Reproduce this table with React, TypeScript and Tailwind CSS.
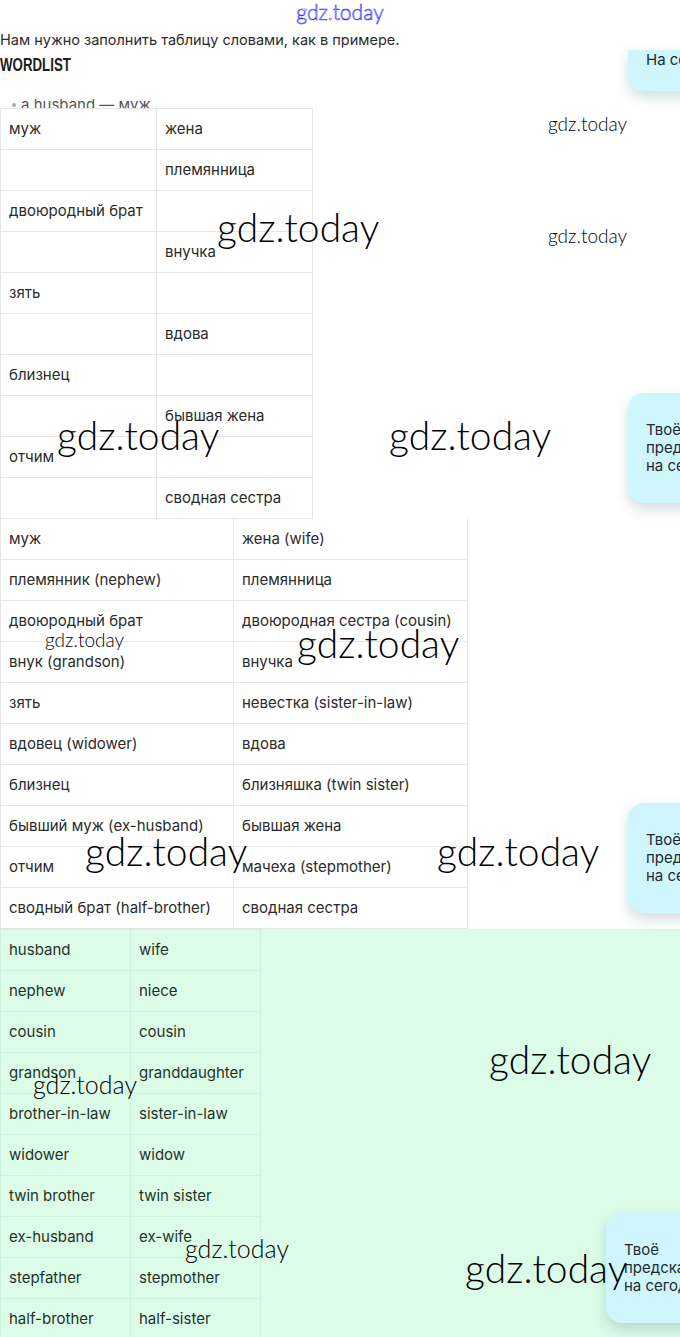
const firstTable = [
  ["муж", "жена"],
  ["", "племянница"],
  ["двоюродный брат", ""],
  ["", "внучка"],
  ["зять", ""],
  ["", "вдова"],
  ["близнец", ""],
  ["", "бывшая жена"],
  ["отчим", ""],
  ["", "сводная сестра"]
];

const secondTable = [
  ["муж", "жена (wife)"],
  ["племянник (nephew)", "племянница"],
  ["двоюродный брат", "двоюродная сестра (cousin)"],
  ["внук (grandson)", "внучка"],
  ["зять", "невестка (sister-in-law)"],
  ["вдовец (widower)", "вдова"],
  ["близнец", "близняшка (twin sister)"],
  ["бывший муж (ex-husband)", "бывшая жена"],
  ["отчим", "мачеха (stepmother)"],
  ["сводный брат (half-brother)", "сводная сестра"]
];

const englishTable = [
  ["husband", "wife"],
  ["nephew", "niece"],
  ["cousin", "cousin"],
  ["grandson", "granddaughter"],
  ["brother-in-law", "sister-in-law"],
  ["widower", "widow"],
  ["twin brother", "twin sister"],
  ["ex-husband", "ex-wife"],
  ["stepfather", "stepmother"],
  ["half-brother", "half-sister"]
];

// watermark stamps: left, top, size
const marks = [
  { x: 548, y: 114, size: "text-[19px] text-[#333]" },
  { x: 217, y: 208, size: "text-[39px]" },
  { x: 548, y: 226, size: "text-[19px] text-[#333]" },
  { x: 57, y: 416, size: "text-[39px]" },
  { x: 389, y: 416, size: "text-[39px]" },
  { x: 45, y: 630, size: "text-[19px] text-[#333]" },
  { x: 297, y: 624, size: "text-[39px]" },
  { x: 85, y: 832, size: "text-[39px]" },
  { x: 437, y: 832, size: "text-[39px]" },
  { x: 489, y: 1040, size: "text-[39px]" },
  { x: 33, y: 1072, size: "text-[25px]" },
  { x: 185, y: 1236, size: "text-[25px]" },
  { x: 465, y: 1249, size: "text-[39px]" }
];

function WordTable({ rows, colWidth, green }: { rows: string[][]; colWidth: string; green?: boolean }) {
  const line = green ? "border-[#cdf2dc]" : "border-[#e6e6e6]";
  return (
    <div className={`grid w-fit border-t border-l ${line} ${colWidth}`}>
      {rows.map((row, i) =>
        row.map((cell, j) => (
          <div
            key={`${i}-${j}`}
            className={`flex h-[41px] items-center border-r border-b ${line} px-[8px] text-[15px] ${green ? "text-[#1f3329]" : "text-[#2b2b2b]"}`}
          >
            {cell}
          </div>
        ))
      )}
    </div>
  );
}

function Bubble({ top, left, cut }: { top: number; left: number; cut?: boolean }) {
  return (
    <div
      className={`absolute w-[220px] bg-[#cff6fd] text-[15px] leading-[18px] text-[#1c2b33] shadow-[0_6px_14px_rgba(0,60,80,0.18)] ${
        cut ? "rounded-b-[16px] pt-[1px] pb-[22px] pl-[18px]" : "rounded-[16px] py-[28px] pl-[18px]"
      }`}
      style={{ top, left }}
    >
      {cut ? (
        <p>На сегодня</p>
      ) : (
        <p>
          Твоё
          <br />
          предсказание
          <br />
          на сегодня
        </p>
      )}
    </div>
  );
}

export default function App() {
  return (
    <div className="relative h-[1337px] w-[680px] overflow-hidden bg-white font-['Inter','Noto_Sans',sans-serif]">
      <div className="flex h-[30px] justify-center">
        <span className="font-['Lato','DejaVu_Sans',sans-serif] text-[21px] font-light leading-[24px] text-transparent [-webkit-text-stroke:0.6px_#3434ff]">
          gdz.today
        </span>
      </div>
      <p className="text-[14.5px] leading-[20px] text-[#2b2b2b]">Нам нужно заполнить таблицу словами, как в примере.</p>
      <h3 className="mt-[5px] w-fit origin-left scale-x-[0.7] font-['Liberation_Sans_Narrow','Liberation_Sans',sans-serif] text-[19px] font-bold leading-[20px] text-[#222]">
        WORDLIST
      </h3>
      <ul className="mt-[20px] h-[13px] overflow-visible pl-[12px] text-[15px] leading-[20px] text-[#555]">
        <li className="flex items-center gap-[5px]">
          <span className="h-[4px] w-[4px] rounded-full bg-[#aaa]" />
          <span>a husband — муж</span>
        </li>
      </ul>

      <div className="relative bg-white">
        <WordTable rows={firstTable} colWidth="grid-cols-[156px_156px]" />
      </div>
      <div className="-mt-px bg-white">
        <WordTable rows={secondTable} colWidth="grid-cols-[233px_234px]" />
      </div>
      <div className="h-[410px] bg-[#dcfce8]">
        <WordTable rows={englishTable} colWidth="grid-cols-[130px_130px]" green />
      </div>

      <Bubble top={50} left={628} cut />
      <Bubble top={393} left={628} />
      <Bubble top={803} left={628} />
      <Bubble top={1213} left={606} />

      {marks.map((m) => (
        <span
          key={`${m.x}-${m.y}`}
          className={`pointer-events-none absolute font-['Lato','DejaVu_Sans',sans-serif] font-light leading-none text-black ${m.size}`}
          style={{ left: m.x, top: m.y }}
        >
          gdz.today
        </span>
      ))}
    </div>
  );
}
